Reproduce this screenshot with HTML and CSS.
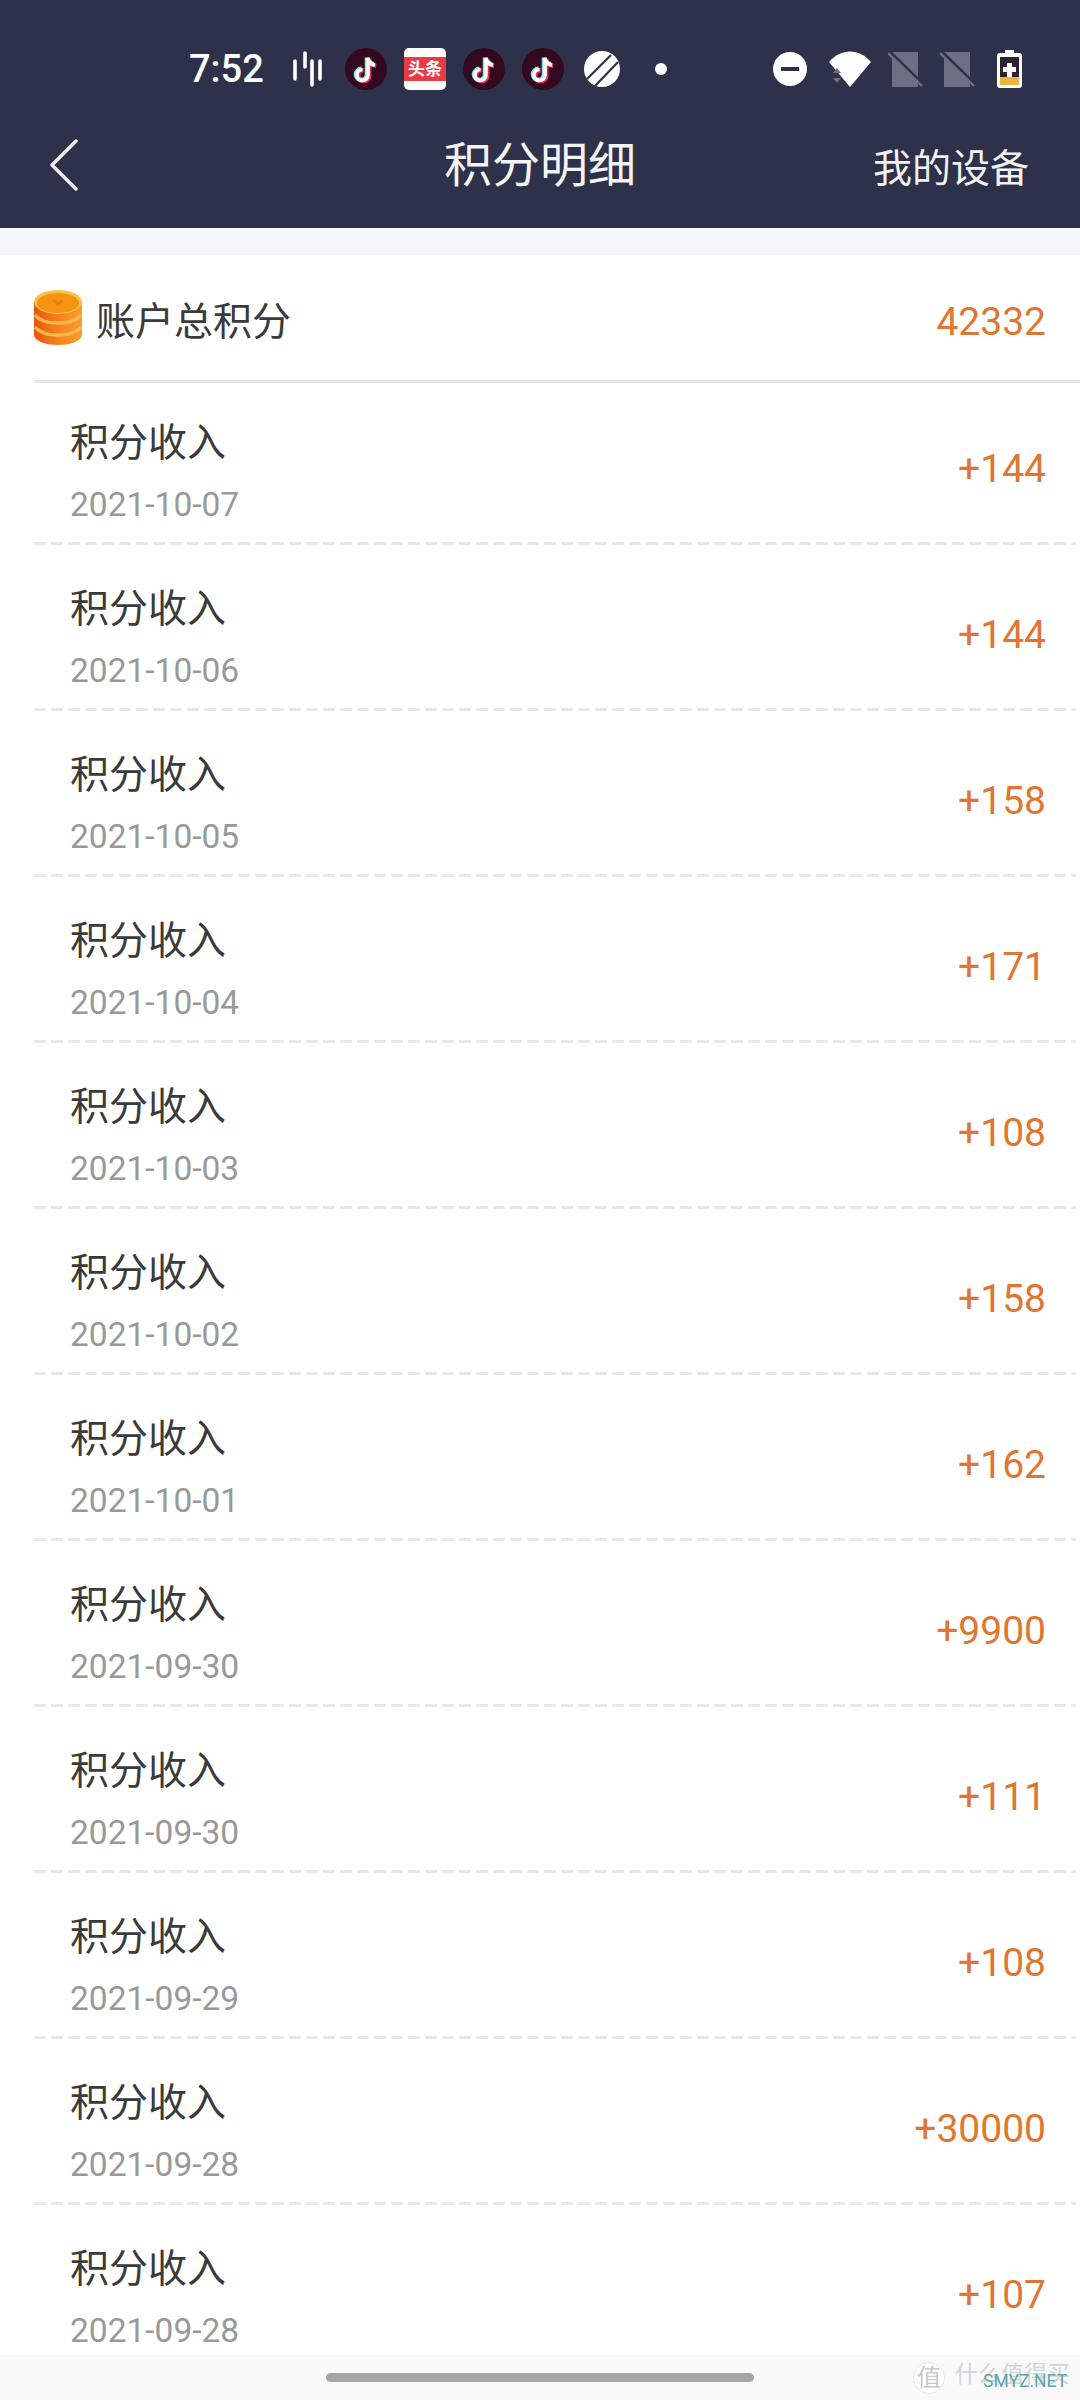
FILE: index.html
```html
<!DOCTYPE html>
<html lang="zh-CN">
<head>
    <meta charset="UTF-8">
    <meta name="viewport" content="width=device-width, initial-scale=1.0">
    <title>积分明细</title>
    <link rel="stylesheet" href="styles.css">
</head>
<body>
    <svg class="sprites" width="0" height="0">
        <symbol id="tiktok" viewBox="0 0 42 42">
            <circle cx="21" cy="21" r="21" fill="#33091f"/>
            <path d="M23 10v17a5.5 5.5 0 1 1-5.5-5.5M23 10c.6 4 3 6.5 7 7" fill="none" stroke="#ee2a55" stroke-width="4.6" transform="translate(1.2 .8)"/>
            <path d="M23 10v17a5.5 5.5 0 1 1-5.5-5.5M23 10c.6 4 3 6.5 7 7" fill="none" stroke="#7fe3e4" stroke-width="4.6" transform="translate(-1 -.6)"/>
            <path d="M23 10v17a5.5 5.5 0 1 1-5.5-5.5M23 10c.6 4 3 6.5 7 7" fill="none" stroke="#fff" stroke-width="3.6"/>
        </symbol>
        <symbol id="sim" viewBox="0 0 35 35">
            <path d="M4 0h26v35H4z" fill="#6d7083"/>
            <path d="M1 -1l34 33" stroke="#2d314a" stroke-width="3"/>
            <path d="M0 1l34 33" stroke="#6d7083" stroke-width="2.4" fill="none"/>
        </symbol>
    </svg>

    <header class="top-bar">
        <div class="status-bar">
            <span class="time">7:52</span>
            <svg class="ic-bars" width="29" height="36" viewBox="0 0 29 36">
                <path d="M2 10v18M12 2v14M19 10v24M27 10v18" fill="none" stroke="#fff" stroke-width="3.6" stroke-linecap="round"/>
            </svg>
            <svg class="ic-app" viewBox="0 0 42 42"><use href="#tiktok"/></svg>
            <span class="toutiao"><span class="toutiao-band">头条</span></span>
            <svg class="ic-app" viewBox="0 0 42 42"><use href="#tiktok"/></svg>
            <svg class="ic-app" viewBox="0 0 42 42"><use href="#tiktok"/></svg>
            <svg class="ic-stripe" width="36" height="36" viewBox="0 0 36 36">
                <circle cx="18" cy="18" r="18" fill="#fff"/>
                <path d="M3 28L27 4M11 35L34 11" stroke="#2d314a" stroke-width="2.2"/>
            </svg>
            <span class="dot"></span>
            <span class="status-right">
                <svg width="34" height="34" viewBox="0 0 34 34">
                    <circle cx="17" cy="17" r="17" fill="#fff"/>
                    <rect x="8" y="15" width="18" height="4" fill="#2d314a"/>
                </svg>
                <svg class="ic-wifi" width="42" height="36" viewBox="0 0 42 36">
                    <path d="M0 11C12 -3 30 -3 42 11L21 36z" fill="#fff"/>
                    <path d="M4 22l4-5 4 5zM4 27h8l-4 5z" fill="#6d7083"/>
                </svg>
                <svg class="ic-sim" width="35" height="35"><use href="#sim"/></svg>
                <svg class="ic-sim" width="35" height="35"><use href="#sim"/></svg>
                <svg class="ic-batt" width="25" height="38" viewBox="0 0 25 38">
                    <path d="M8 0h9v3h5a3 3 0 0 1 3 3v29a3 3 0 0 1-3 3H3a3 3 0 0 1-3-3V6a3 3 0 0 1 3-3h5z" fill="#fff"/>
                    <rect x="3" y="7" width="19" height="20" fill="#2d2433"/>
                    <rect x="3" y="27" width="19" height="8" fill="#eeb53a"/>
                    <path d="M10 13h5v4h4v5h-4v5h-5v-5H6v-5h4z" fill="#fff"/>
                </svg>
            </span>
        </div>
        <nav class="nav-bar">
            <svg class="back" width="30" height="52" viewBox="0 0 30 52">
                <path d="M27 2L3 26l24 24" fill="none" stroke="#eee" stroke-width="3.4" stroke-linecap="round" stroke-linejoin="round"/>
            </svg>
            <span class="nav-title">积分明细</span>
            <span class="nav-link">我的设备</span>
        </nav>
    </header>

    <main class="page">
        <div class="total">
            <svg class="coin" width="48" height="55" viewBox="0 0 48 55">
                <defs>
                    <linearGradient id="coinSide" x1="0" x2="1" y1="0" y2="0">
                        <stop offset="0" stop-color="#e9540c"/>
                        <stop offset=".45" stop-color="#f6801a"/>
                        <stop offset="1" stop-color="#f6a02a"/>
                    </linearGradient>
                </defs>
                <path d="M0 12v33c0 5 10 10 24 10s24-5 24-10V12z" fill="url(#coinSide)"/>
                <path d="M1 25c5 6 14 8 23 8s18-2 23-8M1 37c5 6 14 8 23 8s18-2 23-8" fill="none" stroke="#fbb650" stroke-width="3.4"/>
                <ellipse cx="24" cy="12" rx="24" ry="12" fill="#fbc04a"/>
                <ellipse cx="24" cy="13" rx="21" ry="10" fill="#f59312"/>
                <path d="M19 10l5 4 5-4" fill="none" stroke="#e77d10" stroke-width="2"/>
            </svg>
            <span class="total-label">账户总积分</span>
            <span class="total-num">42332</span>
        </div>

        <ul class="records">
            <li class="record"><div class="record-text"><div class="record-name">积分收入</div><div class="record-date">2021-10-07</div></div><span class="record-num">+144</span></li>
            <li class="record"><div class="record-text"><div class="record-name">积分收入</div><div class="record-date">2021-10-06</div></div><span class="record-num">+144</span></li>
            <li class="record"><div class="record-text"><div class="record-name">积分收入</div><div class="record-date">2021-10-05</div></div><span class="record-num">+158</span></li>
            <li class="record"><div class="record-text"><div class="record-name">积分收入</div><div class="record-date">2021-10-04</div></div><span class="record-num">+171</span></li>
            <li class="record"><div class="record-text"><div class="record-name">积分收入</div><div class="record-date">2021-10-03</div></div><span class="record-num">+108</span></li>
            <li class="record"><div class="record-text"><div class="record-name">积分收入</div><div class="record-date">2021-10-02</div></div><span class="record-num">+158</span></li>
            <li class="record"><div class="record-text"><div class="record-name">积分收入</div><div class="record-date">2021-10-01</div></div><span class="record-num">+162</span></li>
            <li class="record"><div class="record-text"><div class="record-name">积分收入</div><div class="record-date">2021-09-30</div></div><span class="record-num">+9900</span></li>
            <li class="record"><div class="record-text"><div class="record-name">积分收入</div><div class="record-date">2021-09-30</div></div><span class="record-num">+111</span></li>
            <li class="record"><div class="record-text"><div class="record-name">积分收入</div><div class="record-date">2021-09-29</div></div><span class="record-num">+108</span></li>
            <li class="record"><div class="record-text"><div class="record-name">积分收入</div><div class="record-date">2021-09-28</div></div><span class="record-num">+30000</span></li>
            <li class="record"><div class="record-text"><div class="record-name">积分收入</div><div class="record-date">2021-09-28</div></div><span class="record-num">+107</span></li>
        </ul>
    </main>

    <footer class="gesture-bar">
        <span class="pill"></span>
        <span class="watermark">
            <span class="wm-seal">值</span>
            <span class="wm-text">什么值得买</span>
            <span class="wm-site">SMYZ.NET</span>
        </span>
    </footer>
</body>
</html>
```

FILE: styles.css
```css
/* General Styles */
html, body {
    margin: 0;
    padding: 0;
}

body {
    width: 1080px;
    height: 2400px;
    overflow: hidden;
    position: relative;
    background-color: #fff;
    font-family: Roboto, 'Noto Sans CJK SC', sans-serif;
    color: #333;
}

.sprites {
    position: absolute;
}

/* Top bar */
.top-bar {
    height: 228px;
    background-color: #2d314a;
    color: #fff;
}

.status-bar {
    height: 138px;
    padding: 0 58px 0 189px;
    display: flex;
    align-items: center;
    box-sizing: border-box;
}

.time {
    width: 104px;
    font-size: 38px;
    font-weight: 500;
}

.ic-bars {
    margin-right: 23px;
}

.ic-app {
    width: 42px;
    height: 42px;
    margin-right: 17px;
}

.toutiao {
    width: 42px;
    height: 42px;
    margin-right: 17px;
    border-radius: 5px;
    background-color: #fff;
    display: flex;
    align-items: center;
}

.toutiao-band {
    width: 100%;
    height: 24px;
    line-height: 24px;
    background-color: #ec3a45;
    color: #fff;
    font-size: 17px;
    font-weight: 700;
    text-align: center;
    white-space: nowrap;
}

.ic-stripe {
    margin: 0 35px 0 3px;
}

.dot {
    width: 12px;
    height: 12px;
    border-radius: 50%;
    background-color: #fff;
}

.status-right {
    margin-left: auto;
    display: flex;
    align-items: center;
}

.ic-wifi {
    margin: 0 17px 0 22px;
}

.ic-sim {
    margin-right: 17px;
}

.ic-batt {
    margin-left: 5px;
}

.nav-bar {
    height: 54px;
    position: relative;
    display: flex;
    align-items: center;
    justify-content: flex-end;
    padding: 0 51px 0 49px;
}

.back {
    margin-right: auto;
}

.nav-title {
    position: absolute;
    left: 0;
    right: 0;
    top: -2px;
    text-align: center;
    font-size: 48px;
    line-height: 60px;
    color: #f4f4f4;
}

.nav-link {
    font-size: 39px;
    color: #f2f2f2;
}

/* Total row */
.page {
    padding-top: 27px;
    background: linear-gradient(#f4f6fa 27px, #fff 27px);
}

.total {
    height: 125px;
    margin-left: 34px;
    padding-right: 34px;
    border-bottom: 3px solid #e6e6e6;
    display: flex;
    align-items: center;
}

.coin {
    margin-right: 14px;
}

.total-label {
    font-size: 39px;
    color: #3a3a3a;
}

.total-num {
    margin-left: auto;
    margin-top: 8px;
    font-size: 39px;
    color: #df7632;
}

/* Records */
.records {
    list-style: none;
    margin: 0;
    padding: 0 0 0 34px;
}

.record {
    height: 166px;
    box-sizing: border-box;
    padding: 39px 34px 0 36px;
    display: flex;
    align-items: flex-start;
    justify-content: space-between;
    background-image: repeating-linear-gradient(90deg, #e8e8ec 0 12px, transparent 12px 17px);
    background-size: calc(100% - 4px) 3px;
    background-position: 0 100%;
    background-repeat: no-repeat;
}

.record:first-child {
    height: 162px;
    padding-top: 35px;
}

.record:last-child {
    background-image: none;
}

.record-name {
    font-size: 39px;
    line-height: 50px;
    color: #3a3a3a;
}

.record-date {
    margin-top: 17px;
    font-size: 33.5px;
    line-height: 40px;
    color: #999;
}

.record-num {
    margin-top: 28px;
    font-size: 39px;
    line-height: 46px;
    color: #df7632;
}

/* Gesture bar */
.gesture-bar {
    position: absolute;
    left: 0;
    right: 0;
    bottom: 0;
    height: 45px;
    background-color: #f9f9f9;
}

.pill {
    position: absolute;
    left: 326px;
    top: 18px;
    width: 428px;
    height: 9px;
    border-radius: 5px;
    background-color: #a5a5a5;
}

.watermark {
    position: absolute;
    right: 0;
    top: 0;
    width: 170px;
    height: 45px;
}

.wm-seal {
    position: absolute;
    left: 3px;
    top: 7px;
    width: 30px;
    height: 30px;
    line-height: 30px;
    border-radius: 50%;
    border: 1px solid #e8e8e8;
    background-color: #fff;
    text-align: center;
    font-size: 24px;
    color: #c8c8c8;
}

.wm-text {
    position: absolute;
    left: 45px;
    top: 5px;
    font-size: 23px;
    line-height: 30px;
    color: #d4d4d4;
    white-space: nowrap;
}

.wm-site {
    position: absolute;
    left: 73px;
    top: 15px;
    font-size: 17.5px;
    line-height: 22px;
    color: #5da5b0;
}
```
